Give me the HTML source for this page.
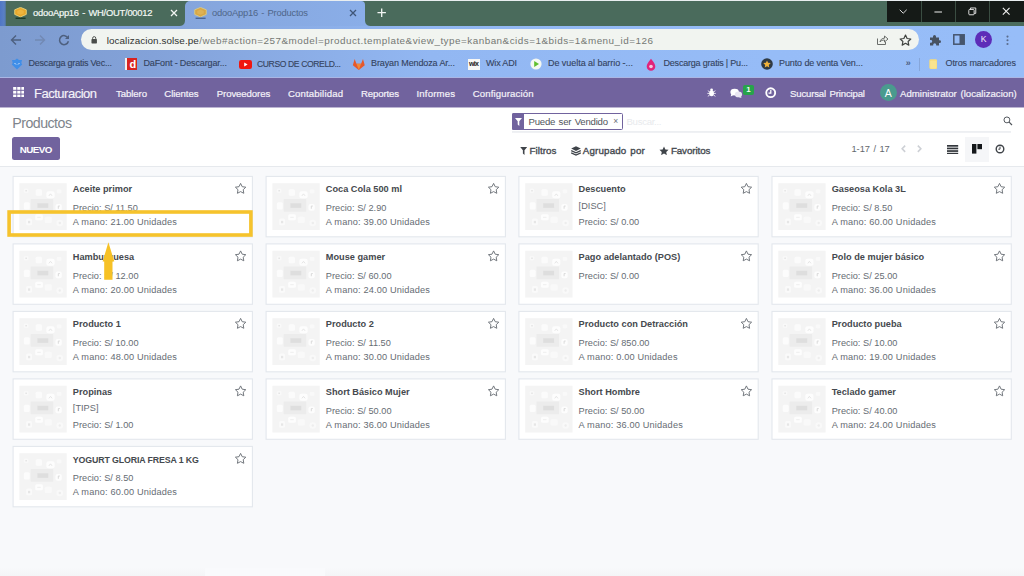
<!DOCTYPE html>
<html><head><meta charset="utf-8"><title>odooApp16 - Productos</title>
<style>
*{margin:0;padding:0;box-sizing:border-box}
html,body{width:1024px;height:576px;overflow:hidden;background:#f8f9fb;font-family:"Liberation Sans",sans-serif}
body{position:relative}
body>*{position:absolute}
.t{white-space:pre;line-height:1;display:block}
.tabstrip{left:0;top:0;width:1024px;height:26px;background:#4a6b5c;border-top:1px solid #e9eef0}
.leftblue{left:0;top:1px;width:6px;height:25px;background:linear-gradient(90deg,#4f76c6,#5a80c4 70%,#4f7391)}
.toolbar{left:0;top:26px;width:1024px;height:27px;background:linear-gradient(90deg,#7d9bcf,#83a2d9 15%,#92b7f2 42%,#96bcf7 75%,#97bdf8)}
.bookbar{left:0;top:53px;width:1024px;height:25px;background:linear-gradient(90deg,#7d9bcf,#83a2d9 15%,#92b7f2 42%,#96bcf7 75%,#97bdf8)}
.acttab{left:185px;top:1px;width:180px;height:25px;border-radius:5px 4px 0 0;background:linear-gradient(90deg,#85a5dc,#8aaee8)}
.winctl{left:887px;top:1px;width:137px;height:21px;background:#151a17}
.winctl i{position:absolute;top:0;width:1px;height:21px;background:#3a4d42}
.winctl i:nth-child(1){left:34px}.winctl i:nth-child(2){left:68px}.winctl i:nth-child(3){left:102px}
.pill{left:81px;top:29px;width:838px;height:20.5px;border-radius:10.5px;background:#f1f4f0}
.navbar{left:0;top:78px;width:1024px;height:29px;background:#71639e;border-bottom:0}
.cp{left:0;top:107px;width:1024px;height:60px;background:#fff;border-top:1px solid #bcb5d2;border-bottom:1px solid #e6e9ed}
.content{left:0;top:167px;width:1024px;height:409px;background:#f8f9fb}
.card{width:240.5px;height:60.5px;background:#fff;border:1px solid #e1e6ec}
.ph{width:47px;height:47px;background:#f1f1f1}
.ph b,.ph u,.ph s,.ph em{position:absolute;display:block;background:#fafafa}
.ph b{left:17px;top:14px;width:14px;height:11px;background:#e6e6e6}
.ph u{left:5px;top:16px;width:6px;height:7px}
.ph s{left:26px;top:7px;width:8px;height:5px}
.ph em{left:18px;top:31px;width:8px;height:5px}
.star{overflow:visible}
.ybox{left:7.3px;top:209.7px;width:245.4px;height:27.5px;border:4px solid #f6c32c}
.ann{z-index:5}
</style></head>
<body>
<div class="tabstrip"></div>
<div class="leftblue"></div>
<div class="toolbar"></div>
<div class="bookbar"></div>
<div class="acttab"></div>
<div style="left:180px;top:21px;width:5px;height:5px;background:radial-gradient(circle at 0 0,#4a6b5c 4.4px,#83a3da 5.4px)"></div>
<div style="left:365px;top:21px;width:5px;height:5px;background:radial-gradient(circle at 100% 0,#4a6b5c 4.4px,#8aaee8 5.4px)"></div>
<div class="winctl"><i></i><i></i><i></i></div>
<div class="pill"></div>
<div style="left:0;top:77px;width:1024px;height:1px;background:#aab6e4"></div>
<div class="navbar"></div>
<div class="cp"></div>
<div class="content"></div>
<div style="left:0;top:568px;width:1024px;height:8px;background:linear-gradient(#f8f9fb,#f4f5f7)"></div>
<div style="left:205px;top:568px;width:120px;height:8px;background:#f9fafc"></div>
<svg style="left:14.4px;top:6.6px;opacity:1" width="13" height="12.4" viewBox="0 0 13 12.4"><path d="M6.5 0.4 L12.3 2.8 L12.3 7.4 L6.5 9.9 L0.7 7.4 L0.7 2.8 Z" fill="#e7a72c" stroke="#e6d27a" stroke-width="0.9" stroke-linejoin="round"/><path d="M3.2 4 L6.5 2.6 L9.8 4 L9.8 6.4 L6.5 7.8 L3.2 6.4 Z" fill="#eeb53e"/><rect x="1.6" y="10.6" width="10" height="1.6" fill="#1c3b27"/></svg>
<svg style="left:194px;top:6.6px;opacity:0.85" width="13" height="12.4" viewBox="0 0 13 12.4"><path d="M6.5 0.4 L12.3 2.8 L12.3 7.4 L6.5 9.9 L0.7 7.4 L0.7 2.8 Z" fill="#e7a72c" stroke="#e6d27a" stroke-width="0.9" stroke-linejoin="round"/><path d="M3.2 4 L6.5 2.6 L9.8 4 L9.8 6.4 L6.5 7.8 L3.2 6.4 Z" fill="#eeb53e"/><rect x="1.6" y="10.6" width="10" height="1.6" fill="#3f5b8a"/></svg>
<svg style="left:170px;top:9px" width="8" height="8" viewBox="0 0 8 8"><path d="M1 1 L7 7 M7 1 L1 7" stroke="#f2f6f3" stroke-width="1.3"/></svg>
<svg style="left:349px;top:9px" width="8" height="8" viewBox="0 0 8 8"><path d="M1 1 L7 7 M7 1 L1 7" stroke="#3f5677" stroke-width="1.3"/></svg>
<svg style="left:377px;top:8.3px" width="9.4" height="9.4" viewBox="0 0 10 10"><path d="M5 0.5 V9.5 M0.5 5 H9.5" stroke="#f2f6f3" stroke-width="1.4"/></svg>
<svg style="left:898.3px;top:8.3px" width="10.4" height="7" viewBox="0 0 12 8"><path d="M2 2 L6 6 L10 2" fill="none" stroke="#e8e8e8" stroke-width="1.1"/></svg>
<svg style="left:933.8px;top:10.8px" width="8.4" height="2" viewBox="0 0 10 2"><path d="M0.5 1 H9.5" stroke="#f0f0f0" stroke-width="1.2"/></svg>
<svg style="left:968px;top:6.6px" width="9" height="9" viewBox="0 0 11 11"><rect x="1" y="3" width="6.5" height="6.5" rx="1" fill="none" stroke="#f0f0f0" stroke-width="1.1"/><path d="M3 3 V1.2 H9.5 V7.8 H7.6" fill="none" stroke="#f0f0f0" stroke-width="1.1"/></svg>
<svg style="left:1002.4px;top:7.2px" width="8.4" height="8.4" viewBox="0 0 10 10"><path d="M1 1 L9 9 M9 1 L1 9" stroke="#f4f4f4" stroke-width="1.3"/></svg>
<svg style="left:10px;top:33.5px" width="12" height="12" viewBox="0 0 12 12"><path d="M11 6 H1.8 M6 1.5 L1.5 6 L6 10.5" fill="none" stroke="#4e607f" stroke-width="1.4"/></svg>
<svg style="left:34px;top:33.5px" width="12" height="12" viewBox="0 0 12 12"><path d="M1 6 H10.2 M6 1.5 L10.5 6 L6 10.5" fill="none" stroke="#7289b3" stroke-width="1.4"/></svg>
<svg style="left:58px;top:33.5px" width="12" height="12" viewBox="0 0 12 12"><path d="M10 4 A4.5 4.5 0 1 0 10.4 7.2" fill="none" stroke="#4e607f" stroke-width="1.5"/><path d="M11 1 V5 H7 Z" fill="#4e607f"/></svg>
<svg style="left:91.4px;top:35.8px" width="6.4" height="7.8" viewBox="0 0 8 10"><rect x="0.5" y="4" width="7" height="5.5" rx="0.8" fill="#4a4d4a"/><path d="M2 4 V2.8 A2 2 0 0 1 6 2.8 V4" fill="none" stroke="#4a4d4a" stroke-width="1.2"/></svg>
<svg style="left:876px;top:34px" width="13" height="12" viewBox="0 0 13 12"><path d="M1.5 4.5 V10.5 H9.5 V8" fill="none" stroke="#6a6d6a" stroke-width="1"/><path d="M4 8 C4.5 5.5 6 4.2 8.5 4.2 V2 L12 5 L8.5 8 V6 C6.5 6 5 6.5 4 8 Z" fill="none" stroke="#6a6d6a" stroke-width="1" stroke-linejoin="round"/></svg>
<svg style="left:899px;top:33.5px" width="13" height="12" viewBox="0 0 13 12"><path d="M6.5 1.1 L8.1 4.5 L11.8 5 L9.1 7.5 L9.8 11.1 L6.5 9.3 L3.2 11.1 L3.9 7.5 L1.2 5 L4.9 4.5 Z" fill="none" stroke="#3f423f" stroke-width="1.2" stroke-linejoin="round"/></svg>
<svg style="left:929px;top:33.5px" width="12" height="12" viewBox="0 0 12 12"><path d="M1 3.5 H4 V2.6 A1.5 1.5 0 1 1 7 2.6 V3.5 H10 V6.3 H10.6 A1.4 1.4 0 1 1 10.6 9.1 H10 V11.5 H7.2 V10.8 A1.5 1.5 0 1 0 4.2 10.8 V11.5 H1 V8.8 H1.8 A1.4 1.4 0 1 0 1.8 6 H1 Z" fill="#475261"/></svg>
<svg style="left:953px;top:34px" width="12" height="11" viewBox="0 0 12 11"><rect x="0.8" y="0.8" width="10.4" height="9.4" fill="none" stroke="#46556d" stroke-width="1.5"/><rect x="6.5" y="1" width="4.5" height="9" fill="#46556d"/></svg>
<div style="left:975px;top:31px;width:17px;height:17px;border-radius:50%;background:#5d2cb8"></div>
<svg style="left:1006.3px;top:34.5px" width="3" height="11" viewBox="0 0 3 11"><circle cx="1.5" cy="1.6" r="1.05" fill="#5a6c8c"/><circle cx="1.5" cy="5.3" r="1.05" fill="#5a6c8c"/><circle cx="1.5" cy="9" r="1.05" fill="#5a6c8c"/></svg>
<div style="left:919px;top:58px;width:1px;height:13px;background:#86a6da"></div>
<svg style="left:11px;top:58px" width="12" height="12" viewBox="0 0 12 12"><path d="M6 0.5 L8 2 L11 2 L10.3 5 L11.2 6.5 L6 11.5 L0.8 6.5 L1.7 5 L1 2 L4 2 Z" fill="#3f8ee8"/><path d="M3.5 5 L5 6.5 M8.5 5 L7 6.5" stroke="#d6e8fb" stroke-width="1"/></svg>
<div style="left:125px;top:58px;width:12px;height:12px;background:#d9231f;border-left:2px solid #f3f1ee"></div>
<svg style="left:239px;top:59.5px" width="13" height="9" viewBox="0 0 13 9"><rect width="13" height="9" rx="2.2" fill="#f0160f"/><path d="M5.2 2.5 L8.6 4.5 L5.2 6.5 Z" fill="#fff"/></svg>
<svg style="left:352.2px;top:57.6px" width="13.6" height="12.6" viewBox="0 0 13 12"><path d="M6.5 11.5 L0.8 7 L2.5 1 L4.3 5.5 H8.7 L10.5 1 L12.2 7 Z" fill="#e5582b"/><path d="M6.5 11.5 L4.3 5.5 H8.7 Z" fill="#f08a3a"/></svg>
<div style="left:468px;top:58.5px;width:12px;height:11px;background:#f7f7f5"></div>
<svg style="left:530px;top:58px" width="12" height="12" viewBox="0 0 12 12"><circle cx="6" cy="6" r="5.6" fill="#f4f8f2"/><path d="M4.2 3 L9 6 L4.2 9 Z" fill="#5fbf2e"/></svg>
<svg style="left:646px;top:57.5px" width="10" height="13" viewBox="0 0 10 13"><path d="M5 0.8 C8 4.5 9.3 6.5 9.3 8.4 A4.3 4.3 0 0 1 0.7 8.4 C0.7 6.5 2 4.5 5 0.8 Z" fill="#e0247c"/><circle cx="5" cy="8.5" r="1.8" fill="#f6c8de"/></svg>
<svg style="left:761px;top:58px" width="12" height="12" viewBox="0 0 12 12"><circle cx="6" cy="6" r="5.8" fill="#2f3a44"/><path d="M6 2.4 L7.1 4.8 L9.7 5.1 L7.8 6.9 L8.3 9.5 L6 8.2 L3.7 9.5 L4.2 6.9 L2.3 5.1 L4.9 4.8 Z" fill="#f0b23a"/></svg>
<svg style="left:928.6px;top:58.5px" width="8.6" height="10.2" viewBox="0 0 8.6 10.2"><rect x="0.3" y="0.3" width="8" height="9.6" rx="1.4" fill="#f8dc78"/><rect x="1.2" y="1.8" width="6.2" height="7.6" rx="0.8" fill="#fae48e"/></svg>
<svg style="left:12.7px;top:86.8px" width="11.7" height="10.4" viewBox="0 0 11.4 10.4"><g fill="#ffffff"><rect x="0" y="0" width="3.2" height="2.8"/><rect x="4.1" y="0" width="3.2" height="2.8"/><rect x="8.2" y="0" width="3.2" height="2.8"/><rect x="0" y="3.8" width="3.2" height="2.8"/><rect x="4.1" y="3.8" width="3.2" height="2.8"/><rect x="8.2" y="3.8" width="3.2" height="2.8"/><rect x="0" y="7.6" width="3.2" height="2.8"/><rect x="4.1" y="7.6" width="3.2" height="2.8"/><rect x="8.2" y="7.6" width="3.2" height="2.8"/></g></svg>
<svg style="left:706.8px;top:88.2px" width="9.2" height="9" viewBox="0 0 10 10"><ellipse cx="5" cy="5.8" rx="2.6" ry="3.4" fill="#fff"/><circle cx="5" cy="2" r="1.5" fill="#fff"/><path d="M0.8 3 L3 4.5 M9.2 3 L7 4.5 M0.3 6 H3 M9.7 6 H7 M0.8 9.3 L3 7.6 M9.2 9.3 L7 7.6" stroke="#fff" stroke-width="0.9"/></svg>
<svg style="left:730px;top:87.8px" width="12.5" height="10.7" viewBox="0 0 14 12"><ellipse cx="5.2" cy="4.6" rx="4.8" ry="3.8" fill="#fff"/><path d="M1.5 6.5 L0.8 9.6 L4 7.8 Z" fill="#fff"/><ellipse cx="9.5" cy="7.2" rx="4" ry="3.2" fill="#e9e6f2"/><path d="M11.5 9 L13.2 11.4 L9.6 10.2 Z" fill="#e9e6f2"/></svg>
<div style="left:742.6px;top:84.6px;width:11px;height:10px;border-radius:2px;background:#27a44a"></div>
<svg style="left:764.9px;top:87.3px" width="11.4" height="11.4" viewBox="0 0 11 11"><circle cx="5.5" cy="5.5" r="4.3" fill="none" stroke="#fff" stroke-width="1.8"/><path d="M5.6 2.8 V5.8 H3.4" fill="none" stroke="#fff" stroke-width="1.2"/></svg>
<div style="left:880px;top:84px;width:17px;height:17px;border-radius:50%;background:#4a9b8e"></div>
<div style="left:12px;top:137px;width:47.6px;height:22.8px;border-radius:2.5px;background:#71639e"></div>
<div style="left:512.4px;top:113.4px;width:110.2px;height:16.2px;border:1px solid #71639e;border-radius:1.5px;background:#fff"></div>
<div style="left:512.4px;top:113.4px;width:11.4px;height:16.2px;background:#71639e;border-radius:1.5px 0 0 1.5px"></div>
<svg style="left:514.6px;top:117.6px" width="7" height="8" viewBox="0 0 7 8"><path d="M0 0 H7 L4.3 3.3 V8 L2.7 6.6 V3.3 Z" fill="#fff"/></svg>
<div style="left:512.4px;top:131px;width:499px;height:2px;background:linear-gradient(#eceef1,#f1f2f5)"></div>
<svg style="left:1002.8px;top:116px" width="9.8" height="9.8" viewBox="0 0 12 12"><circle cx="4.8" cy="4.8" r="3.6" fill="none" stroke="#4f545a" stroke-width="1.2"/><path d="M7.5 7.5 L11 11" stroke="#4f545a" stroke-width="1.5"/></svg>
<svg style="left:519.5px;top:146.9px" width="7.4" height="8" viewBox="0 0 7 8"><path d="M0 0 H7 L4.3 3.3 V8 L2.7 6.6 V3.3 Z" fill="#3f444a"/></svg>
<svg style="left:571px;top:145.8px" width="10" height="10" viewBox="0 0 10 10"><path d="M5 0.3 L9.8 2.6 L5 4.9 L0.2 2.6 Z" fill="#3f444a"/><path d="M0.2 4.6 L5 6.9 L9.8 4.6 M0.2 6.8 L5 9.1 L9.8 6.8" fill="none" stroke="#3f444a" stroke-width="1.3"/></svg>
<svg style="left:658.6px;top:145.8px" width="10" height="9.5" viewBox="0 0 13 12"><path d="M6.5 0.6 L8.3 4.3 L12.4 4.8 L9.4 7.6 L10.2 11.7 L6.5 9.7 L2.8 11.7 L3.6 7.6 L0.6 4.8 L4.7 4.3 Z" fill="#3f444a"/></svg>
<svg style="left:901.2px;top:145px" width="5" height="7.5" viewBox="0 0 6 9"><path d="M5 0.8 L1.4 4.5 L5 8.2" fill="none" stroke="#cdd0d5" stroke-width="1.9"/></svg>
<svg style="left:917.3px;top:145px" width="5" height="7.5" viewBox="0 0 6 9"><path d="M1 0.8 L4.6 4.5 L1 8.2" fill="none" stroke="#cdd0d5" stroke-width="1.9"/></svg>
<svg style="left:947.4px;top:144.6px" width="11.2" height="9.6" viewBox="0 0 11.2 9.6"><g fill="#33373c"><rect y="0" width="11.2" height="1.7"/><rect y="2.6" width="11.2" height="1.7"/><rect y="5.2" width="11.2" height="1.7"/><rect y="7.8" width="11.2" height="1.7"/></g></svg>
<div style="left:965px;top:137.2px;width:24.4px;height:24.5px;background:#f5f6f8"></div>
<svg style="left:971.9px;top:144.4px" width="10.4" height="9.6" viewBox="0 0 10.4 9.6"><rect width="4.4" height="9.6" fill="#14171a"/><rect x="5.4" width="5" height="5.2" fill="#14171a"/></svg>
<svg style="left:995.3px;top:144.3px" width="10" height="10" viewBox="0 0 10 10"><circle cx="5" cy="5" r="3.8" fill="none" stroke="#3f4348" stroke-width="1.4"/><path d="M5 2.6 V5.2 H3.3" fill="none" stroke="#3f4348" stroke-width="1"/></svg>
<svg class="cards" width="1024" height="576" viewBox="0 0 1024 576" style="left:0;top:0"><defs><g id="ph"><rect width="47.3" height="46.8" fill="#f4f4f4"/><rect x="11.3" y="15.8" width="22.5" height="12.6" fill="#ececec"/><rect x="18" y="20" width="10.9" height="4.6" fill="#dedede"/><rect x="16.2" y="5.9" width="6.4" height="6.7" rx="1.5" fill="#fbfbfb"/><rect x="27" y="8.1" width="8.2" height="6.8" rx="2" fill="#fdfdfd"/><path d="M29.5 12.6 L31.1 10.6 L32.7 12.6" fill="none" stroke="#e2e2e2" stroke-width="0.9"/><rect x="4.5" y="19" width="5.9" height="7.2" rx="1.5" fill="#fcfcfc"/><rect x="36.1" y="20.8" width="6.3" height="6.7" rx="2" fill="#fdfdfd"/><path d="M38.9 25.5 V22.8 H40.4" fill="none" stroke="#d6d6d6" stroke-width="0.9"/><rect x="15.8" y="31.1" width="7.7" height="5.9" rx="1.5" fill="#fdfdfd"/><rect x="17.8" y="33.6" width="3.6" height="0.8" fill="#ececec"/><rect x="6.8" y="35.2" width="5.8" height="6.8" rx="1.5" fill="#fafafa"/><rect x="8.6" y="37.6" width="2.2" height="2.4" fill="#e6e6e6"/><rect x="25.3" y="33.4" width="7.2" height="6.3" rx="1.5" fill="#f9f9f9"/><circle cx="40.4" cy="39.7" r="3.3" fill="#f9f9f9"/><circle cx="40.4" cy="39.7" r="1.2" fill="#ededed"/><rect x="4.5" y="5.4" width="4.5" height="4.1" rx="1" fill="#f9f9f9"/><rect x="6" y="6.8" width="1.6" height="1.4" fill="#e4e4e4"/><rect x="37.5" y="6.3" width="4.5" height="3.6" rx="1" fill="#f9f9f9"/></g><path id="st" d="M5.8 0.6 L7.4 3.9 L11 4.4 L8.4 6.9 L9 10.5 L5.8 8.8 L2.6 10.5 L3.2 6.9 L0.6 4.4 L4.2 3.9 Z" fill="none" stroke="#6d7278" stroke-width="0.95" stroke-linejoin="round"/></defs><rect x="13.1" y="176.4" width="239.3" height="60.4" fill="#fff" stroke="#e3e7ed" stroke-width="1.1"/><use href="#ph" x="19.4" y="183.25"/><use href="#st" x="234.8" y="182.8"/><rect x="266.1" y="176.4" width="239.3" height="60.4" fill="#fff" stroke="#e3e7ed" stroke-width="1.1"/><use href="#ph" x="272.4" y="183.25"/><use href="#st" x="487.8" y="182.8"/><rect x="518.9" y="176.4" width="239.3" height="60.4" fill="#fff" stroke="#e3e7ed" stroke-width="1.1"/><use href="#ph" x="525.2" y="183.25"/><use href="#st" x="740.6" y="182.8"/><rect x="772.0" y="176.4" width="239.3" height="60.4" fill="#fff" stroke="#e3e7ed" stroke-width="1.1"/><use href="#ph" x="778.3" y="183.25"/><use href="#st" x="993.7" y="182.8"/><rect x="13.1" y="243.9" width="239.3" height="60.4" fill="#fff" stroke="#e3e7ed" stroke-width="1.1"/><use href="#ph" x="19.4" y="250.75"/><use href="#st" x="234.8" y="250.3"/><rect x="266.1" y="243.9" width="239.3" height="60.4" fill="#fff" stroke="#e3e7ed" stroke-width="1.1"/><use href="#ph" x="272.4" y="250.75"/><use href="#st" x="487.8" y="250.3"/><rect x="518.9" y="243.9" width="239.3" height="60.4" fill="#fff" stroke="#e3e7ed" stroke-width="1.1"/><use href="#ph" x="525.2" y="250.75"/><use href="#st" x="740.6" y="250.3"/><rect x="772.0" y="243.9" width="239.3" height="60.4" fill="#fff" stroke="#e3e7ed" stroke-width="1.1"/><use href="#ph" x="778.3" y="250.75"/><use href="#st" x="993.7" y="250.3"/><rect x="13.1" y="311.4" width="239.3" height="60.4" fill="#fff" stroke="#e3e7ed" stroke-width="1.1"/><use href="#ph" x="19.4" y="318.25"/><use href="#st" x="234.8" y="317.8"/><rect x="266.1" y="311.4" width="239.3" height="60.4" fill="#fff" stroke="#e3e7ed" stroke-width="1.1"/><use href="#ph" x="272.4" y="318.25"/><use href="#st" x="487.8" y="317.8"/><rect x="518.9" y="311.4" width="239.3" height="60.4" fill="#fff" stroke="#e3e7ed" stroke-width="1.1"/><use href="#ph" x="525.2" y="318.25"/><use href="#st" x="740.6" y="317.8"/><rect x="772.0" y="311.4" width="239.3" height="60.4" fill="#fff" stroke="#e3e7ed" stroke-width="1.1"/><use href="#ph" x="778.3" y="318.25"/><use href="#st" x="993.7" y="317.8"/><rect x="13.1" y="378.9" width="239.3" height="60.4" fill="#fff" stroke="#e3e7ed" stroke-width="1.1"/><use href="#ph" x="19.4" y="385.75"/><use href="#st" x="234.8" y="385.3"/><rect x="266.1" y="378.9" width="239.3" height="60.4" fill="#fff" stroke="#e3e7ed" stroke-width="1.1"/><use href="#ph" x="272.4" y="385.75"/><use href="#st" x="487.8" y="385.3"/><rect x="518.9" y="378.9" width="239.3" height="60.4" fill="#fff" stroke="#e3e7ed" stroke-width="1.1"/><use href="#ph" x="525.2" y="385.75"/><use href="#st" x="740.6" y="385.3"/><rect x="772.0" y="378.9" width="239.3" height="60.4" fill="#fff" stroke="#e3e7ed" stroke-width="1.1"/><use href="#ph" x="778.3" y="385.75"/><use href="#st" x="993.7" y="385.3"/><rect x="13.1" y="446.4" width="239.3" height="60.4" fill="#fff" stroke="#e3e7ed" stroke-width="1.1"/><use href="#ph" x="19.4" y="453.25"/><use href="#st" x="234.8" y="452.8"/></svg>
<svg class="ann" width="1024" height="576" viewBox="0 0 1024 576" style="left:0;top:0"><rect x="9.1" y="212" width="241.8" height="23" fill="none" stroke="#f6c32c" stroke-width="3.6"/><path d="M108.4 242.3 L114.3 261.6 L112.5 261.6 L112.5 279.8 L104.2 279.8 L104.2 261.6 L102.6 261.6 Z" fill="#f6c126"/></svg>
<span class="t" style="left:33.0px;top:8.24px;font-size:9.4px;color:#f4f8f5;letter-spacing:-0.238px;word-spacing:1.0px;-webkit-text-stroke:0.2px #f4f8f5;">odooApp16 - WH/OUT/00012</span>
<span class="t" style="left:212.0px;top:8.24px;font-size:9.4px;color:#4f6689;letter-spacing:-0.226px;word-spacing:1.0px;">odooApp16 - Productos</span>
<span class="t" style="left:106.7px;top:36.12px;font-size:9.9px;color:#2f322f;letter-spacing:0.076px;">localizacion.solse.pe</span>
<span class="t" style="left:199.2px;top:36.12px;font-size:9.9px;color:#747874;letter-spacing:0.491px;">/web#action=257&amp;model=product.template&amp;view_type=kanban&amp;cids=1&amp;bids=1&amp;menu_id=126</span>
<span class="t" style="left:980.8px;top:35.42px;font-size:8.6px;color:#f3eefc;letter-spacing:-0.134px;">K</span>
<span class="t" style="left:28.5px;top:59.28px;font-size:9.0px;color:#34435e;letter-spacing:-0.217px;-webkit-text-stroke:0.12px #34435e;">Descarga gratis Vec...</span>
<span class="t" style="left:143.5px;top:59.28px;font-size:9.0px;color:#34435e;letter-spacing:-0.127px;-webkit-text-stroke:0.12px #34435e;">DaFont - Descargar...</span>
<span class="t" style="left:257.0px;top:59.62px;font-size:8.6px;color:#34435e;letter-spacing:-0.396px;-webkit-text-stroke:0.12px #34435e;">CURSO DE CORELD...</span>
<span class="t" style="left:371.0px;top:59.28px;font-size:9.0px;color:#34435e;letter-spacing:-0.109px;-webkit-text-stroke:0.12px #34435e;">Brayan Mendoza Ar...</span>
<span class="t" style="left:486.0px;top:59.28px;font-size:9.0px;color:#34435e;letter-spacing:-0.169px;-webkit-text-stroke:0.12px #34435e;">Wix ADI</span>
<span class="t" style="left:548.0px;top:59.28px;font-size:9.0px;color:#34435e;letter-spacing:-0.046px;-webkit-text-stroke:0.12px #34435e;">De vuelta al barrio -...</span>
<span class="t" style="left:663.5px;top:59.28px;font-size:9.0px;color:#34435e;letter-spacing:-0.199px;-webkit-text-stroke:0.12px #34435e;">Descarga gratis | Pu...</span>
<span class="t" style="left:779.0px;top:59.28px;font-size:9.0px;color:#34435e;letter-spacing:-0.104px;-webkit-text-stroke:0.12px #34435e;">Punto de venta Ven...</span>
<span class="t" style="left:945.5px;top:59.28px;font-size:9.0px;color:#34435e;letter-spacing:-0.102px;-webkit-text-stroke:0.12px #34435e;">Otros marcadores</span>
<span class="t" style="left:905.8px;top:59.38px;font-size:9px;font-weight:700;color:#4d5f80;letter-spacing:0.384px;">»</span>
<span class="t" style="left:129.5px;top:58.69px;font-size:11px;font-weight:700;color:#ffffff;letter-spacing:-1.734px;">d</span>
<span class="t" style="left:469.0px;top:60.37px;font-size:7px;font-weight:700;color:#222;letter-spacing:-0.648px;">wix</span>
<span class="t" style="left:34.0px;top:87.20px;font-size:13.0px;color:#f4f2f9;letter-spacing:-0.492px;-webkit-text-stroke:0.15px #f4f2f9;">Facturacion</span>
<span class="t" style="left:116.0px;top:89.07px;font-size:9.6px;color:#f4f2f9;letter-spacing:-0.078px;-webkit-text-stroke:0.2px #f4f2f9;">Tablero</span>
<span class="t" style="left:164.3px;top:89.07px;font-size:9.6px;color:#f4f2f9;letter-spacing:-0.067px;-webkit-text-stroke:0.2px #f4f2f9;">Clientes</span>
<span class="t" style="left:216.8px;top:89.07px;font-size:9.6px;color:#f4f2f9;letter-spacing:-0.101px;-webkit-text-stroke:0.2px #f4f2f9;">Proveedores</span>
<span class="t" style="left:288.0px;top:89.07px;font-size:9.6px;color:#f4f2f9;letter-spacing:0.151px;-webkit-text-stroke:0.2px #f4f2f9;">Contabilidad</span>
<span class="t" style="left:361.0px;top:89.07px;font-size:9.6px;color:#f4f2f9;letter-spacing:-0.134px;-webkit-text-stroke:0.2px #f4f2f9;">Reportes</span>
<span class="t" style="left:416.5px;top:89.07px;font-size:9.6px;color:#f4f2f9;letter-spacing:0.167px;-webkit-text-stroke:0.2px #f4f2f9;">Informes</span>
<span class="t" style="left:472.8px;top:89.07px;font-size:9.6px;color:#f4f2f9;letter-spacing:0.125px;-webkit-text-stroke:0.2px #f4f2f9;">Configuración</span>
<span class="t" style="left:790.0px;top:88.57px;font-size:9.6px;color:#f4f2f9;letter-spacing:-0.165px;word-spacing:1.0px;-webkit-text-stroke:0.2px #f4f2f9;">Sucursal Principal</span>
<span class="t" style="left:900.0px;top:88.57px;font-size:9.6px;color:#f4f2f9;letter-spacing:0.020px;word-spacing:1.0px;-webkit-text-stroke:0.2px #f4f2f9;">Administrator (localizacion)</span>
<span class="t" style="left:746.2px;top:86.43px;font-size:8px;font-weight:700;color:#f2fff4;letter-spacing:-0.453px;">1</span>
<span class="t" style="left:884.8px;top:87.61px;font-size:10.5px;color:#fff;letter-spacing:0.484px;">A</span>
<span class="t" style="left:12.3px;top:115.88px;font-size:14.2px;color:#7e848b;letter-spacing:-0.524px;">Productos</span>
<span class="t" style="left:19.7px;top:144.60px;font-size:9.8px;font-weight:700;color:#fff;letter-spacing:-0.511px;">NUEVO</span>
<span class="t" style="left:528.5px;top:117.07px;font-size:9.6px;color:#50555b;letter-spacing:-0.224px;word-spacing:1.0px;">Puede ser Vendido</span>
<span class="t" style="left:613.2px;top:117.10px;font-size:8.5px;color:#6a6f75;letter-spacing:-0.969px;">×</span>
<span class="t" style="left:626.5px;top:117.07px;font-size:9.6px;color:#e8eaed;letter-spacing:-0.291px;">Buscar...</span>
<span class="t" style="left:529.5px;top:145.80px;font-size:9.8px;color:#454a50;letter-spacing:0.038px;-webkit-text-stroke:0.35px #454a50;">Filtros</span>
<span class="t" style="left:582.8px;top:145.80px;font-size:9.8px;color:#454a50;letter-spacing:0.148px;word-spacing:1.0px;-webkit-text-stroke:0.35px #454a50;">Agrupado por</span>
<span class="t" style="left:670.9px;top:145.80px;font-size:9.8px;color:#454a50;letter-spacing:-0.100px;-webkit-text-stroke:0.35px #454a50;">Favoritos</span>
<span class="t" style="left:851.5px;top:145.43px;font-size:9.3px;color:#63686e;letter-spacing:-0.063px;word-spacing:1.0px;">1-17 / 17</span>
<span class="t" style="left:72.8px;top:185.26px;font-size:9.2px;font-weight:700;color:#45494e;letter-spacing:0.005px;">Aceite primor</span>
<span class="t" style="left:72.8px;top:204.46px;font-size:9.2px;color:#666c73;letter-spacing:0.023px;">Precio: S/ 11.50</span>
<span class="t" style="left:72.8px;top:218.36px;font-size:9.2px;color:#666c73;letter-spacing:0.169px;">A mano: 21.00 Unidades</span>
<span class="t" style="left:325.8px;top:185.26px;font-size:9.2px;font-weight:700;color:#45494e;letter-spacing:0.006px;">Coca Cola 500 ml</span>
<span class="t" style="left:325.8px;top:204.46px;font-size:9.2px;color:#666c73;letter-spacing:0.023px;">Precio: S/ 2.90</span>
<span class="t" style="left:325.8px;top:218.36px;font-size:9.2px;color:#666c73;letter-spacing:0.169px;">A mano: 39.00 Unidades</span>
<span class="t" style="left:578.6px;top:185.26px;font-size:9.2px;font-weight:700;color:#45494e;letter-spacing:0.006px;">Descuento</span>
<span class="t" style="left:578.6px;top:201.96px;font-size:9.2px;color:#666c73;letter-spacing:0.029px;">[DISC]</span>
<span class="t" style="left:578.6px;top:218.36px;font-size:9.2px;color:#666c73;letter-spacing:0.023px;">Precio: S/ 0.00</span>
<span class="t" style="left:831.7px;top:185.26px;font-size:9.2px;font-weight:700;color:#45494e;letter-spacing:0.006px;">Gaseosa Kola 3L</span>
<span class="t" style="left:831.7px;top:204.46px;font-size:9.2px;color:#666c73;letter-spacing:0.023px;">Precio: S/ 8.50</span>
<span class="t" style="left:831.7px;top:218.36px;font-size:9.2px;color:#666c73;letter-spacing:0.169px;">A mano: 60.00 Unidades</span>
<span class="t" style="left:72.8px;top:252.76px;font-size:9.2px;font-weight:700;color:#45494e;letter-spacing:0.007px;">Hamburguesa</span>
<span class="t" style="left:72.8px;top:271.96px;font-size:9.2px;color:#666c73;letter-spacing:0.024px;">Precio: S/ 12.00</span>
<span class="t" style="left:72.8px;top:285.86px;font-size:9.2px;color:#666c73;letter-spacing:0.169px;">A mano: 20.00 Unidades</span>
<span class="t" style="left:325.8px;top:252.76px;font-size:9.2px;font-weight:700;color:#45494e;letter-spacing:0.006px;">Mouse gamer</span>
<span class="t" style="left:325.8px;top:271.96px;font-size:9.2px;color:#666c73;letter-spacing:0.024px;">Precio: S/ 60.00</span>
<span class="t" style="left:325.8px;top:285.86px;font-size:9.2px;color:#666c73;letter-spacing:0.169px;">A mano: 24.00 Unidades</span>
<span class="t" style="left:578.6px;top:252.76px;font-size:9.2px;font-weight:700;color:#45494e;letter-spacing:0.006px;">Pago adelantado (POS)</span>
<span class="t" style="left:578.6px;top:271.96px;font-size:9.2px;color:#666c73;letter-spacing:0.023px;">Precio: S/ 0.00</span>
<span class="t" style="left:831.7px;top:252.76px;font-size:9.2px;font-weight:700;color:#45494e;letter-spacing:0.005px;">Polo de mujer básico</span>
<span class="t" style="left:831.7px;top:271.96px;font-size:9.2px;color:#666c73;letter-spacing:0.024px;">Precio: S/ 25.00</span>
<span class="t" style="left:831.7px;top:285.86px;font-size:9.2px;color:#666c73;letter-spacing:0.169px;">A mano: 36.00 Unidades</span>
<span class="t" style="left:72.8px;top:320.26px;font-size:9.2px;font-weight:700;color:#45494e;letter-spacing:0.006px;">Producto 1</span>
<span class="t" style="left:72.8px;top:339.46px;font-size:9.2px;color:#666c73;letter-spacing:0.024px;">Precio: S/ 10.00</span>
<span class="t" style="left:72.8px;top:353.36px;font-size:9.2px;color:#666c73;letter-spacing:0.169px;">A mano: 48.00 Unidades</span>
<span class="t" style="left:325.8px;top:320.26px;font-size:9.2px;font-weight:700;color:#45494e;letter-spacing:0.006px;">Producto 2</span>
<span class="t" style="left:325.8px;top:339.46px;font-size:9.2px;color:#666c73;letter-spacing:0.023px;">Precio: S/ 11.50</span>
<span class="t" style="left:325.8px;top:353.36px;font-size:9.2px;color:#666c73;letter-spacing:0.169px;">A mano: 30.00 Unidades</span>
<span class="t" style="left:578.6px;top:320.26px;font-size:9.2px;font-weight:700;color:#45494e;letter-spacing:0.005px;">Producto con Detracción</span>
<span class="t" style="left:578.6px;top:339.46px;font-size:9.2px;color:#666c73;letter-spacing:0.024px;">Precio: S/ 850.00</span>
<span class="t" style="left:578.6px;top:353.36px;font-size:9.2px;color:#666c73;letter-spacing:0.169px;">A mano: 0.00 Unidades</span>
<span class="t" style="left:831.7px;top:320.26px;font-size:9.2px;font-weight:700;color:#45494e;letter-spacing:0.006px;">Producto pueba</span>
<span class="t" style="left:831.7px;top:339.46px;font-size:9.2px;color:#666c73;letter-spacing:0.024px;">Precio: S/ 10.00</span>
<span class="t" style="left:831.7px;top:353.36px;font-size:9.2px;color:#666c73;letter-spacing:0.169px;">A mano: 19.00 Unidades</span>
<span class="t" style="left:72.8px;top:387.76px;font-size:9.2px;font-weight:700;color:#45494e;letter-spacing:0.006px;">Propinas</span>
<span class="t" style="left:72.8px;top:404.46px;font-size:9.2px;color:#666c73;letter-spacing:0.028px;">[TIPS]</span>
<span class="t" style="left:72.8px;top:420.86px;font-size:9.2px;color:#666c73;letter-spacing:0.023px;">Precio: S/ 1.00</span>
<span class="t" style="left:325.8px;top:387.76px;font-size:9.2px;font-weight:700;color:#45494e;letter-spacing:0.005px;">Short Básico Mujer</span>
<span class="t" style="left:325.8px;top:406.96px;font-size:9.2px;color:#666c73;letter-spacing:0.024px;">Precio: S/ 50.00</span>
<span class="t" style="left:325.8px;top:420.86px;font-size:9.2px;color:#666c73;letter-spacing:0.169px;">A mano: 36.00 Unidades</span>
<span class="t" style="left:578.6px;top:387.76px;font-size:9.2px;font-weight:700;color:#45494e;letter-spacing:0.006px;">Short Hombre</span>
<span class="t" style="left:578.6px;top:406.96px;font-size:9.2px;color:#666c73;letter-spacing:0.024px;">Precio: S/ 50.00</span>
<span class="t" style="left:578.6px;top:420.86px;font-size:9.2px;color:#666c73;letter-spacing:0.169px;">A mano: 36.00 Unidades</span>
<span class="t" style="left:831.7px;top:387.76px;font-size:9.2px;font-weight:700;color:#45494e;letter-spacing:0.006px;">Teclado gamer</span>
<span class="t" style="left:831.7px;top:406.96px;font-size:9.2px;color:#666c73;letter-spacing:0.024px;">Precio: S/ 40.00</span>
<span class="t" style="left:831.7px;top:420.86px;font-size:9.2px;color:#666c73;letter-spacing:0.169px;">A mano: 24.00 Unidades</span>
<span class="t" style="left:72.8px;top:455.60px;font-size:8.8px;font-weight:700;color:#45494e;letter-spacing:-0.121px;">YOGURT GLORIA FRESA 1 KG</span>
<span class="t" style="left:72.8px;top:474.46px;font-size:9.2px;color:#666c73;letter-spacing:0.023px;">Precio: S/ 8.50</span>
<span class="t" style="left:72.8px;top:488.36px;font-size:9.2px;color:#666c73;letter-spacing:0.169px;">A mano: 60.00 Unidades</span>
</body></html>
